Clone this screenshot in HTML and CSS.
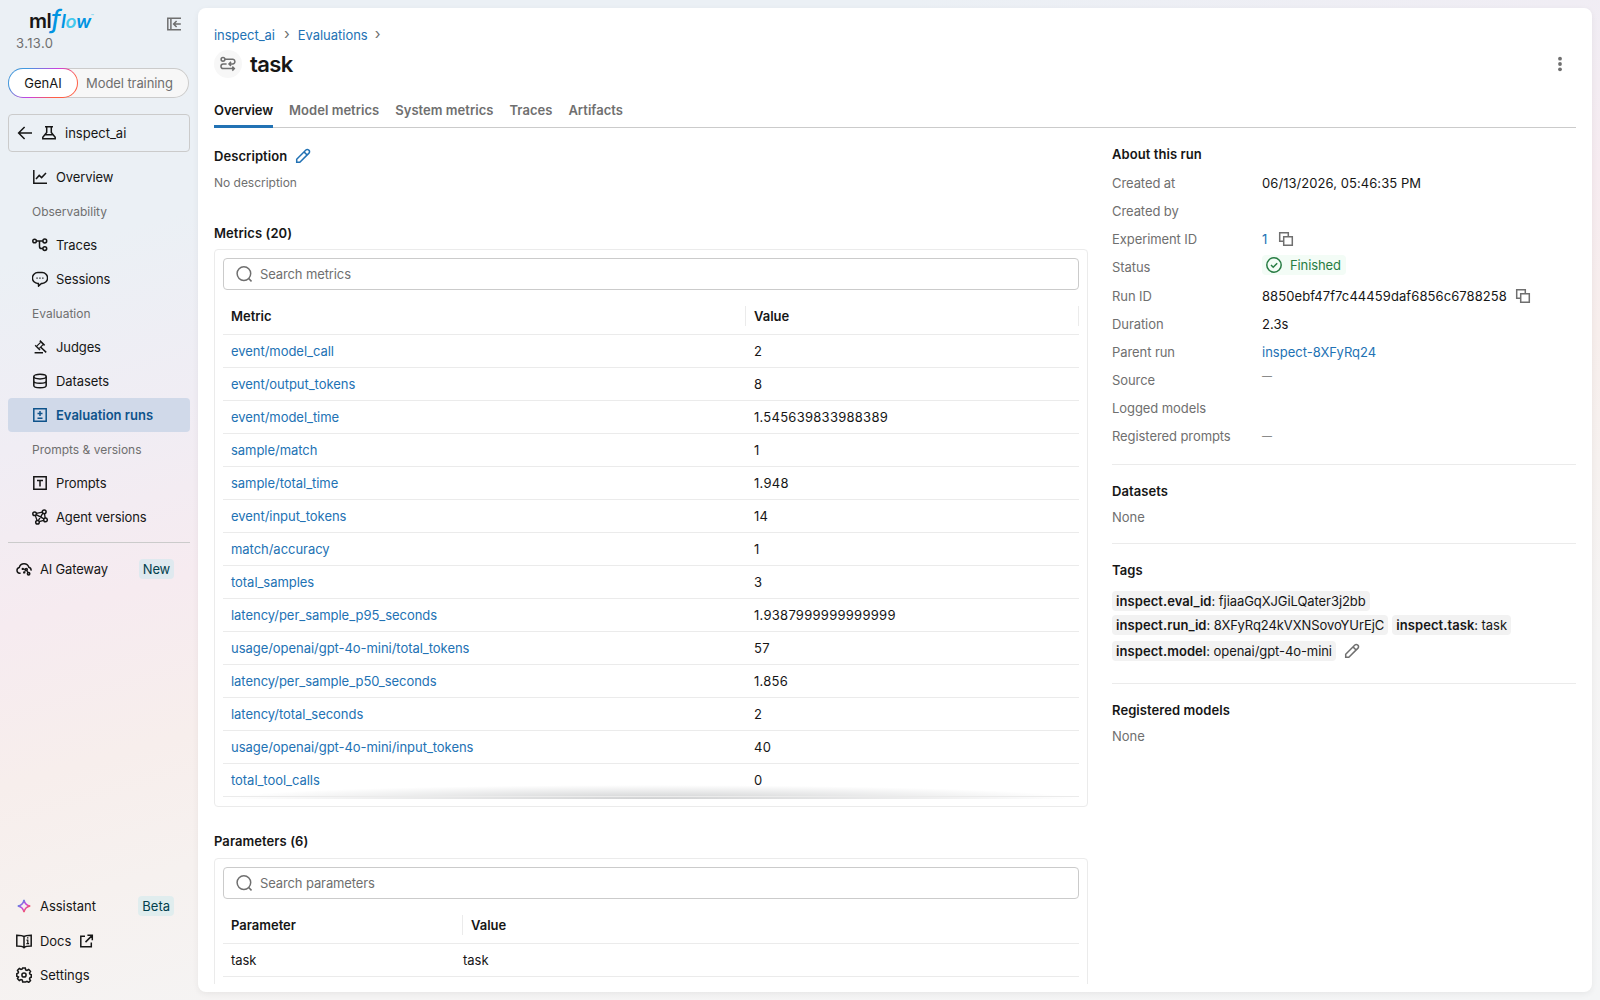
FILE: index.html
```html
<!DOCTYPE html>
<html lang="en">
<head>
<meta charset="utf-8">
<title>task - MLflow</title>
<link rel="stylesheet" href="styles.css">
</head>
<body>
<div class="app">
  <aside class="sidebar">
    <header class="brand">
      <div class="brand-left">
        <div class="logo"><span class="logo-ml">ml</span><span class="logo-f">f</span><span class="logo-low">l<span class="logo-o">o</span>w</span><span class="logo-tm">™</span></div>
        <div class="version">3.13.0</div>
      </div>
      <svg class="collapse" viewBox="0 0 16 16" width="16" height="16"><path d="M15 2.200H1.800v11.600H15M4.900 2v12M14.800 8H8M10.600 5 7.600 8l3 3"/></svg>
    </header>
    <div class="mode"><span class="mode-on">GenAI</span><span class="mode-off">Model training</span></div>
    <div class="experiment">
      <svg viewBox="0 0 16 16" width="16" height="16"><path d="M15 8H1.800M7.600 2 1.600 8l6 6"/></svg>
      <svg viewBox="0 0 16 16" width="16" height="16"><path d="M4 1.800h8M5.700 2v5.500L1.800 12.200v1.600h12.400v-1.600L10.300 7.500V2M4.200 9.800h7.600"/></svg>
      <span>inspect_ai</span>
    </div>
    <nav class="nav">
      <a class="item"><svg viewBox="0 0 16 16" width="16" height="16"><path d="M1.800 1v13.200H15M4 10l3.200-3.600 2.400 2.200L14 4"/></svg>Overview</a>
      <div class="group">Observability</div>
      <a class="item"><svg viewBox="0 0 16 16" width="16" height="16"><circle cx="2.600" cy="4" r="1.800"/><circle cx="12.800" cy="4" r="1.900"/><circle cx="12.800" cy="11.600" r="1.900"/><path d="M4.400 4h6.500M7.500 4v5.500q0 2.100 2.100 2.100h1.300"/></svg>Traces</a>
      <a class="item"><svg viewBox="0 0 16 16" width="16" height="16"><path d="M6.400 12.400H5.800A5.200 5.200 0 0 1 5.800 1.600h4.400a5.400 5.400 0 0 1 0 10.800H9.400L6.600 15z"/><path class="dots" d="M4.400 6.400h1.300v1.300H4.400zM7.300 6.400h1.300v1.300H7.300zM10.200 6.400h1.300v1.300h-1.300z"/></svg>Sessions</a>
      <div class="group">Evaluation</div>
      <a class="item"><svg viewBox="0 0 16 16" width="16" height="16"><path d="M2.600 13.800H11M7.800 1.600l4.800 4.800M3.200 6.200 8 11M8.800 8.200l5.400 5.200"/><path stroke-width="1.200" d="M8.600 3.300 5 6.900M11 5.700 7.400 9.300"/></svg>Judges</a>
      <a class="item"><svg viewBox="0 0 16 16" width="16" height="16"><ellipse cx="8" cy="3.600" rx="6.200" ry="2.300"/><path d="M1.800 3.600v8.800c0 1.300 2.800 2.300 6.200 2.300s6.200-1 6.200-2.300V3.600M1.800 8c0 1.300 2.800 2.300 6.200 2.300s6.200-1 6.200-2.300"/></svg>Datasets</a>
      <a class="item active"><svg viewBox="0 0 16 16" width="16" height="16"><path d="M1.800 1.800h12.400v12.400H1.800zM8 4v5M5.500 6.500h5M5.500 11.300h5"/></svg>Evaluation runs</a>
      <div class="group">Prompts &amp; versions</div>
      <a class="item"><svg viewBox="0 0 16 16" width="16" height="16"><path d="M1.800 1.800h12.400v12.400H1.800zM5 5.400h6M8 5.400V11.500"/></svg>Prompts</a>
      <a class="item"><svg viewBox="0 0 16 16" width="16" height="16"><circle cx="2.600" cy="4.700" r="1.800"/><circle cx="12.200" cy="2.800" r="1.900"/><circle cx="5.500" cy="13.200" r="1.800"/><circle cx="13.500" cy="10.900" r="1.800"/><path stroke-width="1.300" d="M4.400 4.300l6-1.100M3.300 6.400l1.700 5M7.200 12.700l4.500-1.300M12.500 4.700l.7 4.400M10.900 4.200l-4.600 7.400M4.200 5.600l7.800 4.300"/></svg>Agent versions</a>
    </nav>
    <div class="gateway">
      <a class="foot"><svg viewBox="0 0 16 16" width="16" height="16"><path d="M4.600 12.300H3.700A3 3 0 0 1 3.300 6.400 5 5 0 0 1 12.800 6.200a3 3 0 0 1 2.200 3.400"/><path stroke-width="1.200" d="M7.400 8l1.800.4M10.900 9.600l1.100 2M9.400 9.500l-.8 1.200"/><circle class="dots" cx="6.800" cy="7.900" r="1.200"/><circle cx="10.300" cy="8.600" r="1"/><circle cx="12.600" cy="12.700" r="1.200"/><circle class="dots" cx="8.200" cy="11.400" r="1.200"/></svg>AI Gateway<span class="badge new">New</span></a>
    </div>
    <div class="bottom">
      <a class="foot first"><svg viewBox="0 0 16 16" width="16" height="16"><defs><linearGradient id="ai" x1="0" y1="0" x2="1" y2="1"><stop offset=".15" stop-color="#4299e0"/><stop offset=".5" stop-color="#ca42e0"/><stop offset=".85" stop-color="#ff5f46"/></linearGradient></defs><path style="stroke:url(#ai)" d="M8 1.800Q8.900 7.100 14.200 8 8.900 8.900 8 14.200 7.100 8.900 1.800 8 7.100 7.100 8 1.800z"/></svg>Assistant<span class="badge beta">Beta</span></a>
      <a class="foot"><svg viewBox="0 0 16 16" width="16" height="16"><path d="M8 3.600C6.800 2.500 5 2.200.8 2.200v10.800c4 0 5.800.2 7.200 1.600 1.400-1.400 3.200-1.600 7.200-1.600V2.200C11 2.200 9.200 2.500 8 3.600zM8 3.600v11"/><path stroke-width="1.200" d="M10.500 7.200h1.300v3.500M10.400 10.600h2.700M11 4.900h1.400"/></svg>Docs<svg class="ext" viewBox="0 0 16 16" width="16" height="16"><path d="M7 3.200H2.800v10.500h10.500V9.500M9.400 2.300h4.900v4.900M14 2.600 7.500 9.100"/></svg></a>
      <a class="foot"><svg viewBox="0 0 16 16" width="16" height="16"><circle cx="8" cy="8" r="2.100"/><path d="M6.700 1h2.600l.4 1.900 1.300.6 1.700-1 1.800 1.800-1 1.700.5 1.200 1.300.5v2.500l-1.300.5-.5 1.200 1 1.700-1.800 1.800-1.700-1-1.300.6L9.300 15H6.700l-.4-1.900-1.300-.6-1.700 1-1.800-1.800 1-1.700L2 9.800.8 9.300V6.700L2 6.200l.5-1.200-1-1.700 1.800-1.800 1.700 1 1.300-.6z"/></svg>Settings</a>
    </div>
  </aside>

  <main class="card">
    <div class="crumbs"><a>inspect_ai</a><i>›</i><a>Evaluations</a><i>›</i></div>
    <div class="title">
      <span class="title-icon"><svg viewBox="0 0 16 16" width="16" height="16"><circle cx="3" cy="3.300" r="1.900"/><path d="M5 3.300h8a2.200 2.200 0 0 1 1.900 2.200A2.300 2.300 0 0 1 12.700 7.900H9.200M11 5.900 9 7.900l2 2M6.600 7.900H3.300a2.300 2.300 0 0 0 0 4.700h11M12.300 10.600l2 2-2 2"/></svg></span>
      <h1>task</h1>
      <svg class="kebab" viewBox="0 0 16 16" width="16" height="16"><circle cx="8" cy="2.700" r="1.900"/><circle cx="8" cy="8" r="1.900"/><circle cx="8" cy="13.300" r="1.900"/></svg>
    </div>
    <div class="tabs"><a class="on">Overview</a><a>Model metrics</a><a>System metrics</a><a>Traces</a><a>Artifacts</a></div>

    <div class="columns">
      <section class="left">
        <h2 class="desc-h">Description<svg class="pencil" viewBox="0 0 16 16" width="16" height="16"><path d="M1.700 11.200 10.900 2a1.900 1.900 0 0 1 2.700 0l.4.400a1.900 1.900 0 0 1 0 2.700L4.800 14.300H1.700zM9 3.900l3.100 3.100"/></svg></h2>
        <p class="muted desc">No description</p>
        <h2 class="metrics-h">Metrics (20)</h2>
        <div class="box metrics">
          <div class="search"><svg viewBox="0 0 16 16" width="16" height="16"><circle cx="7.900" cy="7.600" r="6.800"/><path d="M12.700 12.400l2.800 3"/></svg>Search metrics</div>
          <div class="thead"><b>Metric</b><b class="split">Value</b></div>
          <div class="tbody">
            <div class="tr"><a>event/model_call</a><span>2</span></div>
            <div class="tr"><a>event/output_tokens</a><span>8</span></div>
            <div class="tr"><a>event/model_time</a><span>1.545639833988389</span></div>
            <div class="tr"><a>sample/match</a><span>1</span></div>
            <div class="tr"><a>sample/total_time</a><span>1.948</span></div>
            <div class="tr"><a>event/input_tokens</a><span>14</span></div>
            <div class="tr"><a>match/accuracy</a><span>1</span></div>
            <div class="tr"><a>total_samples</a><span>3</span></div>
            <div class="tr"><a>latency/per_sample_p95_seconds</a><span>1.9387999999999999</span></div>
            <div class="tr"><a>usage/openai/gpt-4o-mini/total_tokens</a><span>57</span></div>
            <div class="tr"><a>latency/per_sample_p50_seconds</a><span>1.856</span></div>
            <div class="tr"><a>latency/total_seconds</a><span>2</span></div>
            <div class="tr"><a>usage/openai/gpt-4o-mini/input_tokens</a><span>40</span></div>
            <div class="tr"><a>total_tool_calls</a><span>0</span></div>
          </div>
        </div>
        <h2 class="params-h">Parameters (6)</h2>
        <div class="box params">
          <div class="search"><svg viewBox="0 0 16 16" width="16" height="16"><circle cx="7.900" cy="7.600" r="6.800"/><path d="M12.700 12.400l2.800 3"/></svg>Search parameters</div>
          <div class="thead"><b>Parameter</b><b class="split">Value</b></div>
          <div class="tr"><span>task</span><span>task</span></div>
        </div>
      </section>

      <section class="right">
        <div class="about">
          <h2>About this run</h2>
          <dl>
            <div><dt>Created at</dt><dd>06/13/2026, 05:46:35 PM</dd></div>
            <div><dt>Created by</dt><dd></dd></div>
            <div><dt>Experiment ID</dt><dd><a class="exp-id">1</a><svg class="copy" viewBox="0 0 16 16" width="16" height="16"><path d="M5.300 10.300H1.700V1.700h8.600v3.600M5.700 5.700h8.600v8.600H5.700z"/></svg></dd></div>
            <div class="status-row"><dt>Status</dt><dd><span class="status"><svg viewBox="0 0 16 16" width="16" height="16"><circle cx="8" cy="8" r="7.200"/><path d="M5 8l2.200 2.200 4-4"/></svg>Finished</span></dd></div>
            <div><dt>Run ID</dt><dd><span class="run-id">8850ebf47f7c44459daf6856c6788258</span><svg class="copy" viewBox="0 0 16 16" width="16" height="16"><path d="M5.300 10.300H1.700V1.700h8.600v3.600M5.700 5.700h8.600v8.600H5.700z"/></svg></dd></div>
            <div><dt>Duration</dt><dd>2.3s</dd></div>
            <div><dt>Parent run</dt><dd><a>inspect-8XFyRq24</a></dd></div>
            <div class="source"><dt>Source</dt><dd class="dash">—</dd></div>
            <div><dt>Logged models</dt><dd></dd></div>
            <div><dt>Registered prompts</dt><dd class="dash">—</dd></div>
          </dl>
        </div>
        <div class="block datasets"><h2>Datasets</h2><p class="muted">None</p></div>
        <div class="block tags">
          <h2>Tags</h2>
          <div class="tag-row"><span class="tag"><b>inspect.eval_id</b>: fjiaaGqXJGiLQater3j2bb</span></div>
          <div class="tag-row"><span class="tag"><b>inspect.run_id</b>: 8XFyRq24kVXNSovoYUrEjC</span><span class="tag"><b>inspect.task</b>: task</span></div>
          <div class="tag-row last"><span class="tag"><b>inspect.model</b>: openai/gpt-4o-mini</span><svg class="pencil" viewBox="0 0 16 16" width="16" height="16"><path d="M1.700 11.200 10.900 2a1.900 1.900 0 0 1 2.700 0l.4.400a1.900 1.900 0 0 1 0 2.700L4.800 14.300H1.700zM9 3.900l3.100 3.100"/></svg></div>
        </div>
        <div class="block models"><h2>Registered models</h2><p class="muted">None</p></div>
      </section>
    </div>
  </main>
</div>
</body>
</html>
```
FILE: styles.css
```css
* { box-sizing: border-box; }
body {
  margin: 0;
  font: 13px/20px Inter, "Liberation Sans", sans-serif;
  color: #161616;
}
h1, h2, p, dl, dd { margin: 0; }
h2 { font-size: 13px; line-height: 20px; font-weight: 600; letter-spacing: .07px; }
svg { fill: none; stroke: currentColor; stroke-width: 1.5; flex: none; }
a { color: #2272b4; }
.muted { color: #6f6f6f; }

.app {
  display: flex;
  width: 1600px;
  height: 1000px;
  overflow: hidden;
  background: linear-gradient(164deg, #ebf0f5 0%, #ebf0f5 18%, #f0edf4 31%, #f6ebf0 43%, #f7eeec 54%, #f6f1ef 63%, #f5f4f4 75%, #f4f5f6 100%);
}

/* Sidebar */
.sidebar { width: 198px; padding: 8px; display: flex; flex-direction: column; }
.brand { display: flex; justify-content: space-between; height: 60px; padding: 0 8px; }
.brand-left { display: flex; flex-direction: column; }
.logo { display: flex; align-items: baseline; height: 25px; line-height: 22px; padding-left: 13px; font-size: 20px; letter-spacing: -.6px; }
.logo-ml { font-weight: 600; }
.logo-f, .logo-low { color: #0194e2; font-style: italic; font-weight: 600; }
.logo-f { font-size: 25px; margin: 0 1px 0 0; font-weight: 500; }
.logo-low { font-size: 18px; letter-spacing: -.3px; }
.logo-o { color: #43c9ed; }
.logo-tm { color: #43c9ed; font-size: 5px; align-self: flex-start; line-height: 17px; }
.version { color: #6f6f6f; line-height: 21px; letter-spacing: .4px; }
.collapse { margin-top: 8px; color: #6f6f6f; }
.mode {
  display: flex;
  width: 181px;
  height: 30px;
  line-height: 31px;
  border-radius: 15px;
  background: #f7f7f7;
  box-shadow: inset 0 0 0 1px #cbcbcb;
}
.mode-on {
  width: 70px;
  line-height: 29px;
  text-align: center;
  border: 1px solid transparent;
  border-radius: 15px;
  background: linear-gradient(#fff, #fff) padding-box, linear-gradient(135deg, #4299e0 20%, #ca42e0 50%, #ff5f46 75%) border-box;
}
.mode-off { padding-left: 8px; color: #6f6f6f; letter-spacing: -.08px; }
.experiment {
  display: flex;
  align-items: center;
  gap: 8px;
  height: 38px;
  margin-top: 16px;
  padding-left: 8px;
  border: 1px solid #cbcbcb;
  border-radius: 4px;
}
.nav { margin-top: 8px; padding-bottom: 8px; border-bottom: 1px solid #cbcbcb; }
.item, .group { display: flex; align-items: center; gap: 8px; height: 34px; padding-left: 24px; color: #161616; letter-spacing: -.1px; }
.group { padding-top: 1px; color: #6f6f6f; font-size: 12px; letter-spacing: 0; }
.item.active { color: #0e538b; font-weight: 600; background: #d0d9e9; border-radius: 4px; letter-spacing: 0; }
.dots { fill: currentColor; stroke: none; }
.gateway { margin-top: 9px; }
.gateway .foot { letter-spacing: -.18px; }
.foot { display: flex; align-items: center; gap: 8px; height: 34px; padding-left: 8px; color: #161616; letter-spacing: -.04px; }
.first { height: 36px; }
.badge { margin: 0 16px 0 auto; height: 20px; padding: 0 4px; border-radius: 4px; color: #02404d; background: #e0edee; letter-spacing: 0; }
.new { background: #dfe9ef; letter-spacing: -.2px; }
.bottom { margin-top: auto; }
.ext { margin-left: -1px; }

/* Main panel */
.card {
  width: 1394px;
  height: 984px;
  margin-top: 8px;
  padding: 16px 16px 8px;
  border-radius: 8px;
  background: #fff;
  box-shadow: 0 2px 6px rgba(0, 0, 0, .06);
  display: flex;
  flex-direction: column;
}
.crumbs { display: flex; gap: 8px; height: 20px; line-height: 22px; letter-spacing: -.03px; }
.crumbs i { font-style: normal; color: #6f6f6f; font-size: 15px; line-height: 20px; }
.crumbs i:nth-child(2) { margin: 0 0 0 1px; }
.crumbs i:last-child { margin-left: -1px; }
.title { display: flex; align-items: center; height: 40px; }
.title-icon { display: grid; place-items: center; width: 28px; height: 28px; border-radius: 50%; background: #f7f7f7; color: #6f6f6f; }
h1 { margin-left: 8px; font-size: 22px; line-height: 28px; font-weight: 600; letter-spacing: -.6px; }
.kebab { margin: 0 8px 0 auto; fill: #6f6f6f; stroke: none; }
.tabs { display: flex; gap: 16px; height: 44px; border-bottom: 1px solid #cbcbcb; }
.tabs a { height: 44px; padding-top: 16px; font-weight: 600; color: #6f6f6f; letter-spacing: .03px; }
.tabs .on { color: #161616; border-bottom: 3px solid #2272b4; letter-spacing: -.1px; }
.columns { display: flex; gap: 24px; flex: 1; min-height: 0; overflow: hidden; }
.left { width: 874px; }
.desc-h { display: flex; align-items: center; gap: 8px; margin-top: 18px; }
.desc-h .pencil { color: #2272b4; }
.desc { margin-top: 7px; font-size: 12px; letter-spacing: -.02px; }
.metrics-h { margin-top: 30px; }
.box { padding: 8px; border: 1px solid #ebebeb; border-radius: 4px; }
.metrics { height: 558px; margin-top: 6px; }
.search {
  display: flex;
  align-items: center;
  gap: 8px;
  height: 32px;
  padding-left: 12px;
  border: 1px solid #cbcbcb;
  border-radius: 4px;
  color: #6f6f6f;
  letter-spacing: -.12px;
}
.thead { display: flex; align-items: center; height: 45px; padding: 8px 0 0; border-bottom: 1px solid #ebebeb; }
.thead b { font-weight: 600; width: 522px; padding-left: 8px; }
.metrics .thead .split { flex: 1; border-right: 1px solid #ebebeb; }
.thead .split { border-left: 1px solid #ebebeb; }
.tbody {
  height: 464px;
  overflow: hidden;
  background: radial-gradient(farthest-side at 50% 100%, rgba(17, 23, 28, .2), rgba(17, 23, 28, 0)) 0 100% / 100% 14px no-repeat;
}
.tr { display: flex; align-items: center; height: 33px; border-bottom: 1px solid #ebebeb; }
.tr > * { flex: none; padding-left: 8px; }
.tr > :first-child { width: 523px; letter-spacing: -.04px; }
.tr > :last-child { letter-spacing: .26px; }
.params-h { margin-top: 24px; }
.params { height: 200px; margin-top: 7px; }
.params .thead b { width: 239px; }
.params .tr > :first-child { width: 240px; }
.params .tr > :last-child { padding-left: 0; letter-spacing: 0; }

.right { width: 464px; }
.about { height: 337px; padding-top: 16px; border-bottom: 1px solid #ebebeb; }
dl { margin-top: 5px; }
dl > div { display: flex; align-items: center; height: 28px; }
dt { width: 150px; color: #6f6f6f; letter-spacing: -.08px; }
dd { display: flex; align-items: center; height: 28px; letter-spacing: .06px; }
dd a { letter-spacing: 0; }
.run-id { letter-spacing: .08px; }
dl > .status-row { height: 29px; align-items: flex-start; }
.status-row dt { line-height: 28px; }
.status-row dd { height: 24px; }
.status { display: flex; align-items: center; gap: 8px; height: 20px; padding: 0 5px 0 4px; margin-top: -1px; border-radius: 4px; color: #277c43; background: #f3fcf6; letter-spacing: -.1px; }
.copy { margin-left: 8px; color: #6f6f6f; }
.exp-id + .copy { margin-left: 11px; }
.dash { color: #6f6f6f; font-size: 10px; }
.source .dash { padding-bottom: 9px; }
.block { border-bottom: 1px solid #ebebeb; padding-top: 16px; }
.block p { margin-top: 6px; }
.datasets { height: 79px; }
.tags { height: 140px; }
.tags h2 { margin-bottom: 11px; }
.tag-row { display: flex; align-items: center; gap: 4px; height: 20px; margin-bottom: 4px; }
.tag { height: 20px; padding: 0 4px; border-radius: 4px; background: #f2f2f2; white-space: nowrap; letter-spacing: -.07px; }
.tag b { font-weight: 600; letter-spacing: .07px; }
.last { margin-top: 6px; }
.last .pencil { margin-left: 4px; color: #6f6f6f; }
.models { border: 0; }
```
